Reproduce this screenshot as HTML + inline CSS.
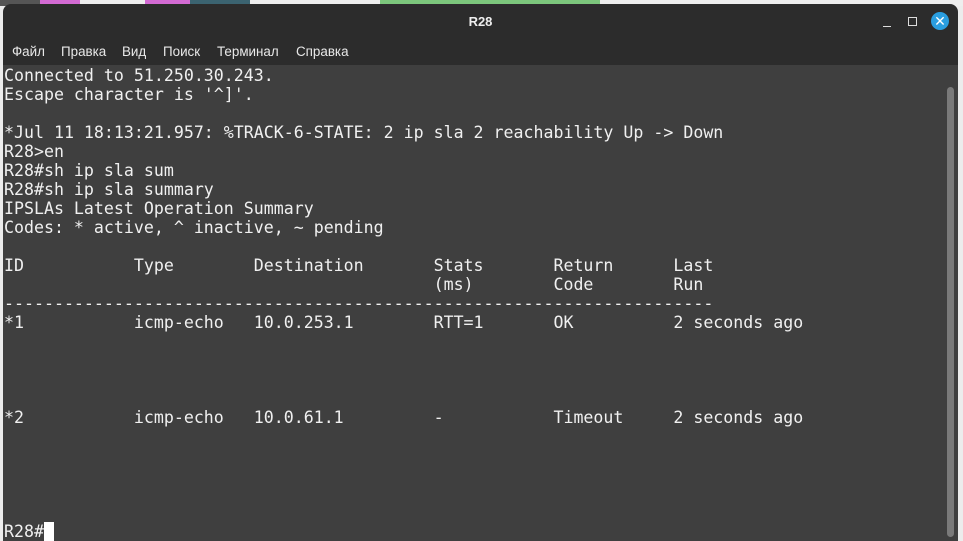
<!DOCTYPE html>
<html><head><meta charset="utf-8"><style>
body{margin:0;width:963px;height:541px;overflow:hidden;background:#ececec;position:relative;font-family:"Liberation Sans","DejaVu Sans",sans-serif}
.strip{position:absolute;left:0;top:0;width:963px;height:6px;background:linear-gradient(90deg,#555 0,#555 40px,#d36bd3 40px,#d36bd3 80px,#eee 80px,#eee 145px,#d36bd3 145px,#d36bd3 190px,#3b6370 190px,#3b6370 250px,#eee 250px,#eee 380px,#7cc67c 380px,#7cc67c 600px,#eee 600px)}
.win{position:absolute;left:3px;top:4px;width:955px;height:537px;background:#2c2c2c;border-radius:8px 8px 0 0;overflow:hidden}
.title{position:absolute;left:0;top:0;width:955px;height:36px;text-align:center;line-height:36px;color:#eee;font-weight:bold;font-size:13px}
.menu span{position:absolute;top:40px;font-size:13.4px;color:#e8e8e8}
.term{position:absolute;left:0;top:61px;width:955px;height:476px;background:#3f3f3f}
pre{margin:0;position:absolute;left:1px;top:1px;font-family:"DejaVu Sans Mono",monospace;font-size:16.6px;line-height:19px;color:#f0f0f0}
.cur{background:#fff;display:inline-block;width:10px;height:19px;vertical-align:top}
.sb{position:absolute;left:944px;top:22px;width:7px;height:450px;background:#7a7a7a;border-radius:4px}
.close{position:absolute;left:928px;top:8px;width:18px;height:18px;border-radius:50%;background:#2a9ee0;color:#fff;font-size:14px;line-height:18px;text-align:center;font-weight:bold}
.min{position:absolute;left:880px;top:22px;width:8px;height:1px;background:#ddd}
.max{position:absolute;left:905px;top:13px;width:7px;height:7px;border:1px solid #ddd}
</style></head><body>
<div class="strip"></div>
<div class="win">
<div class="title">R28</div>
<div class="min"></div><div class="max"></div><div class="close">✕</div>
<div class="menu"><span style="left:9px">Файл</span><span style="left:58px">Правка</span><span style="left:119px">Вид</span><span style="left:160px">Поиск</span><span style="left:214px">Терминал</span><span style="left:293px">Справка</span></div>
<div class="term">
<pre>Connected to 51.250.30.243.
Escape character is '^]'.

*Jul 11 18:13:21.957: %TRACK-6-STATE: 2 ip sla 2 reachability Up -> Down
R28>en
R28#sh ip sla sum
R28#sh ip sla summary
IPSLAs Latest Operation Summary
Codes: * active, ^ inactive, ~ pending

ID           Type        Destination       Stats       Return      Last
                                           (ms)        Code        Run
-----------------------------------------------------------------------
*1           icmp-echo   10.0.253.1        RTT=1       OK          2 seconds ago




*2           icmp-echo   10.0.61.1         -           Timeout     2 seconds ago





R28#<span class="cur"></span></pre>
<div class="sb"></div>
</div>
</div>
</body></html>
